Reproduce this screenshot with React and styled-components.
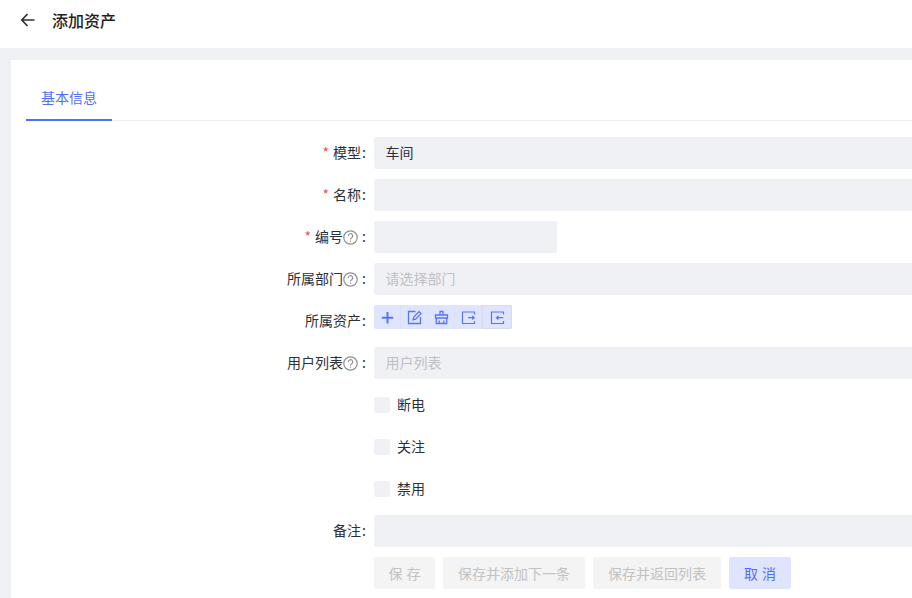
import React from 'react';
import styled, {createGlobalStyle} from 'styled-components';

const GlobalStyle = createGlobalStyle`
  html, body {
    margin: 0;
    padding: 0;
    height: 100%;
    overflow: hidden;
    background: #f0f1f5;
  }
  body {
    font-family: "Noto Sans CJK SC", "Liberation Sans", sans-serif;
    font-size: 14px;
    color: #2c2f3c;
  }
`;

const Page = styled.div`
  width: 912px;
  height: 598px;
  overflow: hidden;
`;
const Header = styled.header`
  height: 48px;
  background: #fff;
  display: flex;
  align-items: flex-start;
  padding: 11px 0 0 20px;
  box-sizing: border-box;
`;
const BackIcon = styled.svg`
  width: 16px;
  height: 16px;
  margin-top: 1px;
  color: #303030;
`;
const Title = styled.h1`
  margin: 0 0 0 16px;
  font-size: 16px;
  font-weight: 500;
  line-height: 18px;
  color: #1f1f24;
`;
const Card = styled.main`
  width: 1000px;
  margin: 12px 0 0 11px;
  padding: 15px 15px 0;
  background: #fff;
  height: 538px;
  box-sizing: border-box;
`;
const Tabs = styled.div`
  display: flex;
  height: 46px;
  box-sizing: border-box;
  border-bottom: 1px solid #eeeff2;
`;
const Tab = styled.div`
  width: 86px;
  height: 46px;
  box-sizing: border-box;
  text-align: center;
  line-height: 44px;
  color: #4f6ef7;
  border-bottom: 2px solid #4f6ef7;
`;
const Form = styled.form`
  display: flex;
  flex-direction: column;
  gap: 10px;
  padding-top: 16px;
`;
const Row = styled.div`
  display: flex;
  align-items: center;
  height: 32px;
`;
const Label = styled.label`
  width: 340px;
  margin-right: 8px;
  padding-bottom: 2px;
  box-sizing: border-box;
  display: flex;
  justify-content: flex-end;
  align-items: center;
  color: #2c2f3c;
  white-space: nowrap;
`;
const Star = styled.span`
  color: #f05252;
  margin-right: 4px;
`;
const Colon = styled.span`
  width: 5px;
  text-align: right;
`;
const Input = styled.div`
  flex: ${p => (p.$width ? 'none' : 1)};
  width: ${p => (p.$width ? `${p.$width}px` : 'auto')};
  height: 32px;
  box-sizing: border-box;
  padding-left: 11.5px;
  line-height: 30px;
  border-radius: 2px;
  background: #f0f1f5;
  color: ${p => (p.$placeholder ? '#bfc0c4' : '#2c2f3c')};
`;
const Toolbar = styled.div`
  display: flex;
  align-self: flex-start;
  height: 24px;
  border-radius: 2px;
  background: #e0e5ff;
`;
const ToolButton = styled.div`
  width: 27px;
  height: 24px;
  box-sizing: border-box;
  display: flex;
  align-items: center;
  justify-content: center;
  color: #5674f8;
  border-right: 1px solid #dbe1fd;
  ${p => p.$active && `
    width: 30px;
    border: 1px solid #d9dbe8;
    border-radius: 2px;
  `}
`;
const ToolIcon = styled.svg`
  width: 15px;
  height: 15px;
  fill: none;
  stroke: currentColor;
  stroke-width: 1.3;
`;
const CheckRow = styled(Row)`
  padding-left: 348px;
`;
const Checkbox = styled.span`
  width: 16px;
  height: 16px;
  border-radius: 2px;
  background: #f0f1f5;
  margin-right: 7px;
`;
const CheckText = styled.span`
  padding-bottom: 2px;
`;
const Buttons = styled(Row)`
  padding-left: 348px;
  gap: 8px;
`;
const Button = styled.button`
  width: ${p => p.$width}px;
  height: 32px;
  padding: 0 0 1px;
  border: none;
  border-radius: 2px;
  font: inherit;
  word-spacing: 1px;
  background: ${p => (p.$cancel ? '#e0e5ff' : '#f4f4f4')};
  color: ${p => (p.$cancel ? '#4f6ef7' : '#c2c2c2')};
`;
const HelpIcon = styled.svg`
  width: 15px;
  height: 15px;
  margin: 2px 3px 0 0;
  fill: none;
  stroke: #909090;
  stroke-width: 1.2;
`;

const Help = () => (
  <HelpIcon viewBox="0 0 15 15">
    <circle cx="7.5" cy="7.5" r="6.7" />
    <path d="M5.3 5.9a2.2 2.2 0 1 1 3.3 1.9c-.8.4-1.1.8-1.1 1.6" />
    <path d="M7.5 10.5v1.2" />
  </HelpIcon>
);

const FIELDS_TOP = [
  {label: '模型', required: true, value: '车间'},
  {label: '名称', required: true},
  {label: '编号', required: true, help: true, width: 183},
  {label: '所属部门', help: true, placeholder: '请选择部门'},
];

const TOOLS = [
  <path key="add" d="M7.5 2v11.5M1.8 7.7h11.4" strokeWidth="2" />,
  <path key="edit" d="M8.5 1.5h-7v12h12V7M6 9.8l.6-2.6L12 1.6l2 2-5.4 5.6z" />,
  <path key="clear" d="M6 5V1.5h3V5M1.5 8h12V5h-12zM2.3 8v5.5h10.4V8M5.2 10.5v3M9.8 10.5v3" />,
  <path key="export" d="M13.5 4.5V2h-12v11.5h12V11M7 7.7h6.3M11.2 5.9l2 1.8-2 1.8" strokeWidth="1.2" />,
  <path key="import" d="M13.5 4.5V2h-12v11.5h12V11M6.5 7.7h6.8M8.5 5.9l-2 1.8 2 1.8" strokeWidth="1.2" />,
];

const Field = ({label, required, help, width, value, placeholder}) => (
  <Row>
    <Label>
      {required && <Star>*</Star>}
      {label}
      {help && <Help />}
      <Colon>:</Colon>
    </Label>
    <Input $width={width} $placeholder={!!placeholder}>{value || placeholder}</Input>
  </Row>
);

export default function App() {
  return (
    <Page>
      <GlobalStyle />
      <Header>
        <BackIcon viewBox="0 0 16 16" fill="none" stroke="currentColor" strokeWidth="1.7">
          <path d="M14.5 8H1.8M7.5 2L1.8 8l5.7 6" />
        </BackIcon>
        <Title>添加资产</Title>
      </Header>
      <Card>
        <Tabs>
          <Tab>基本信息</Tab>
        </Tabs>
        <Form>
          {FIELDS_TOP.map(f => <Field key={f.label} {...f} />)}
          <Row>
            <Label>所属资产<Colon>:</Colon></Label>
            <Toolbar>
              {TOOLS.map((icon, i) => (
                <ToolButton key={i} $active={i === TOOLS.length - 1}>
                  <ToolIcon viewBox="0 0 15 15">{icon}</ToolIcon>
                </ToolButton>
              ))}
            </Toolbar>
          </Row>
          <Field label="用户列表" help placeholder="用户列表" />
          {['断电', '关注', '禁用'].map(text => (
            <CheckRow key={text}>
              <Checkbox />
              <CheckText>{text}</CheckText>
            </CheckRow>
          ))}
          <Field label="备注" />
          <Buttons>
            <Button type="button" $width={61}>保 存</Button>
            <Button type="button" $width={142}>保存并添加下一条</Button>
            <Button type="button" $width={128}>保存并返回列表</Button>
            <Button type="button" $width={62} $cancel>取 消</Button>
          </Buttons>
        </Form>
      </Card>
    </Page>
  );
}
